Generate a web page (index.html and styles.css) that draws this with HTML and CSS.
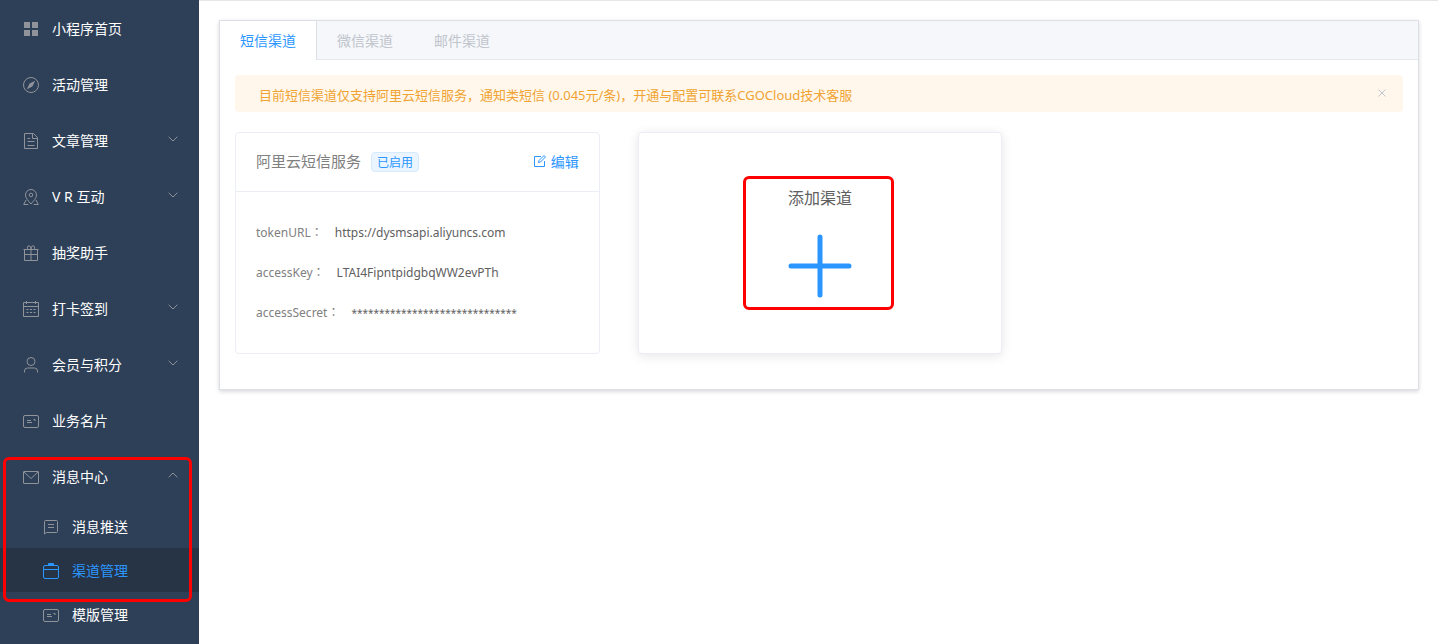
FILE: index.html
```html
<!DOCTYPE html>
<html lang="zh-CN">
<head>
<meta charset="utf-8">
<title>渠道管理</title>
<link rel="stylesheet" href="styles.css">
</head>
<body>
<svg class="sprite" aria-hidden="true">
  <symbol id="chevron" viewBox="0 0 10 6"><path d="M.7 .8 5 5 9.3 .8"/></symbol>
  <symbol id="card" viewBox="0 0 16 16"><rect x=".5" y="2.5" width="15" height="12" rx="1.500"/><path d="M4 7.500h4M4 9.500h5M10.500 6.500h1.500v1.500"/></symbol>
</svg>
<div class="app">
  <nav class="sidebar" aria-label="主菜单">
    <ul class="menu">
      <li><a class="item" href="#"><svg class="icon solid" viewBox="0 0 16 16"><path d="M1 1h6v6H1zM9 1h6v6H9zM1 9h6v6H1zM9 9h6v6H9z"/></svg><span class="label">小程序首页</span></a></li>
      <li><a class="item" href="#"><svg class="icon" viewBox="0 0 16 16"><circle cx="8" cy="8" r="7.500"/><path class="fill" d="M12.200 3.800 9.400 9.400 3.800 12.200 6.600 6.600z"/></svg><span class="label">活动管理</span></a></li>
      <li><a class="item" href="#"><svg class="icon" viewBox="0 0 16 16"><path d="M1.500 .5h9l4 4v11h-13zM9.500 .5v5h5M4.500 5.500h2.500M4.500 8.500h7M4.500 12.500h7"/></svg><span class="label">文章管理</span><svg class="arrow"><use href="#chevron"/></svg></a></li>
      <li><a class="item" href="#"><svg class="icon" viewBox="0 0 16 16"><path d="M8 15C5.500 12 2.500 9.300 2.500 6a5.500 5.500 0 0 1 11 0c0 3.300-3 6-5.500 9zM3 11 .7 15.500h4.600M13 11l2.300 4.500h-4.600"/><circle cx="8" cy="6" r="1.800"/></svg><span class="label">V R 互动</span><svg class="arrow"><use href="#chevron"/></svg></a></li>
      <li><a class="item" href="#"><svg class="icon" viewBox="0 0 16 16"><path d="M.5 4.500h15M1.500 4.500v11h13v-11M1.500 9.500h13M8 4.500v11M5 4.500C3.800 3 4.300 .8 6 .8c1.400 0 2 1.500 2 3.700 0-2.200.6-3.700 2-3.700 1.700 0 2.200 2.200 1 3.700"/></svg><span class="label">抽奖助手</span></a></li>
      <li><a class="item" href="#"><svg class="icon" viewBox="0 0 16 16"><path d="M.5 1.500h15v14H.5zM.5 5.500h15M3.500 0v3M12.500 0v3"/><path stroke-dasharray="2 1.500" d="M3.500 8.500h9M3.500 11.500h9"/></svg><span class="label">打卡签到</span><svg class="arrow"><use href="#chevron"/></svg></a></li>
      <li><a class="item" href="#"><svg class="icon" viewBox="0 0 16 16"><circle cx="8" cy="4.500" r="4"/><path d="M1.500 15.500V14a3 3 0 0 1 3-3h7a3 3 0 0 1 3 3v1.500"/></svg><span class="label">会员与积分</span><svg class="arrow"><use href="#chevron"/></svg></a></li>
      <li><a class="item" href="#"><svg class="icon"><use href="#card"/></svg><span class="label">业务名片</span></a></li>
      <li class="group">
        <a class="item" href="#" aria-expanded="true"><svg class="icon" viewBox="0 0 16 16"><rect x=".5" y="2.500" width="15" height="12" rx=".5"/><path d="M1 3l7 6.500L15 3"/></svg><span class="label">消息中心</span><svg class="arrow open"><use href="#chevron"/></svg></a>
        <ul class="submenu">
          <li><a class="item" href="#"><svg class="icon" viewBox="0 0 16 16"><path d="M1.500 15V2.500a1 1 0 0 1 1-1h11a1 1 0 0 1 1 1v10a1 1 0 0 1-1 1H3.500L1.500 15M5 5.500h6M5 8.500h6"/></svg><span class="label">消息推送</span></a></li>
          <li><a class="item active" href="#" aria-current="page"><svg class="icon" viewBox="0 0 16 16"><rect x=".5" y="2.500" width="15" height="13" rx="1.500"/><path d="M.5 6.500h15M5.500 2.500v-2h5v2M5.500 1.500h5"/></svg><span class="label">渠道管理</span></a></li>
          <li><a class="item" href="#"><svg class="icon"><use href="#card"/></svg><span class="label">模版管理</span></a></li>
        </ul>
        <div class="mark mark-menu"></div>
      </li>
    </ul>
  </nav>
  <main class="main">
    <section class="panel">
      <div class="tabs" role="tablist">
        <button class="tab selected" role="tab" aria-selected="true">短信渠道</button>
        <button class="tab" role="tab" aria-selected="false">微信渠道</button>
        <button class="tab" role="tab" aria-selected="false">邮件渠道</button>
      </div>
      <div class="content">
        <div class="alert" role="alert">
          <p class="alert-text">目前短信渠道仅支持阿里云短信服务，通知类短信 (0.045元/条)，开通与配置可联系CGOCloud技术客服</p>
          <button class="close" aria-label="关闭"><svg class="close-icon" viewBox="0 0 8 8"><path d="M.5 .5l7 7M7.500 .5l-7 7"/></svg></button>
        </div>
        <div class="cards">
          <article class="card">
            <header class="card-head">
              <h2 class="card-title">阿里云短信服务</h2>
              <span class="tag">已启用</span>
              <button class="edit"><svg class="edit-icon" viewBox="0 0 12 12"><path d="M7 1.500H.5v10h10V6M4.500 7.500l.5-2L10 .5l1.500 1.500-5 5z"/></svg>编辑</button>
            </header>
            <dl class="fields">
              <div class="field"><dt>tokenURL<span class="punct" lang="zh-TW">：</span></dt><dd>https://dysmsapi.aliyuncs.com</dd></div>
              <div class="field"><dt>accessKey<span class="punct" lang="zh-TW">：</span></dt><dd>LTAI4FipntpidgbqWW2evPTh</dd></div>
              <div class="field"><dt>accessSecret<span class="punct" lang="zh-TW">：</span></dt><dd class="masked">******************************</dd></div>
            </dl>
          </article>
          <button class="card add">
            <span class="add-title">添加渠道</span>
            <svg class="plus" viewBox="0 0 64 64"><path d="M32 3v58M3 32h58"/></svg>
            <span class="mark mark-add"></span>
          </button>
        </div>
      </div>
    </section>
  </main>
</div>
</body>
</html>
```
FILE: styles.css
```css
* { box-sizing: border-box; }
body, ul, p, h2, dl, dd { margin: 0; padding: 0; }
body, button { font-family: "Noto Sans", "Noto Sans CJK SC", sans-serif; }
body { background: #fff; font-size: 14px; }
button { background: none; border: 0; padding: 0; cursor: pointer; }
ul { list-style: none; }
a { text-decoration: none; color: inherit; }
svg { fill: none; stroke: currentColor; flex: none; }
.sprite { position: absolute; width: 0; height: 0; }
.punct { font-family: "Noto Sans CJK TC", sans-serif; line-height: 1; }

.app { display: flex; height: 100vh; overflow: hidden; }
.sidebar { width: 199px; flex: none; background: #2e4058; color: #fff; overflow: hidden; }
.item { display: flex; align-items: center; height: 56px; padding: 2px 20px 0 23px; }
.icon { width: 16px; height: 16px; margin-right: 13px; color: #909399; }
.icon.solid, .icon .fill { fill: currentColor; stroke: none; }
.label { flex: 1; line-height: 20px; }
.arrow { width: 10px; height: 6px; margin: 0 1px 4px 0; color: #909399; }
.arrow.open { transform: rotate(180deg); }
.group { position: relative; }
.submenu .item { height: 44px; padding-left: 43px; }
.submenu .active { background: #263445; color: #2b96ff; }
.active .icon { color: inherit; }
.mark { position: absolute; border: 3px solid #f00; border-radius: 6px; pointer-events: none; }
.mark-menu { left: 3px; right: 7px; top: 9px; height: 145px; }

.main { flex: 1; min-width: 0; border-top: 1px solid #e6e6e6; padding: 19px; padding-left: 20px; }
.panel { border: 1px solid #dcdfe6; box-shadow: 0 2px 4px rgba(0, 0, 0, .12), 0 0 6px rgba(0, 0, 0, .04); }
.tabs { display: flex; height: 39px; background: #f5f7fa; border-bottom: 1px solid #e4e7ed; }
.tab { height: 39px; padding: 0 20px 2px; border-right: 1px solid transparent; font-size: 14px; color: #c0c4cc; }
.tab.selected { background: #fff; color: #2b96ff; border-right-color: #dcdfe6; }
.content { padding: 15px 15px 35px; }
.alert { display: flex; justify-content: space-between; align-items: center; height: 37px; padding: 0 16px 0 24px; border-radius: 4px; background: #fff7eb; color: #f0a332; }
.alert-text { padding-top: 3px; font-size: 13px; line-height: 21px; }
.close { display: flex; padding: 0 1px 2px; color: #c0c4cc; }
.close-icon { width: 8px; height: 8px; }

.cards { display: grid; grid-template-columns: repeat(3, 1fr); gap: 38px; margin: 20px -2px 0 0; }
.card { border: 1px solid #ebeef5; border-radius: 4px; background: #fff; }
.card-head { display: flex; align-items: center; height: 59px; padding: 0 20px; border-bottom: 1px solid #ebeef5; }
.card-title { padding-bottom: 3px; font-size: 15px; font-weight: 400; color: #808080; }
.tag { height: 20px; margin-left: 10px; padding: 0 5px; border: 1px solid #d5eaff; border-radius: 4px; background: #eaf5ff; color: #2b96ff; font-size: 12px; line-height: 20px; }
.edit { display: flex; align-items: center; gap: 5px; margin-left: auto; padding-bottom: 2px; color: #2b96ff; font-size: 14px; }
.edit-icon { width: 12px; height: 12px; }
.fields { padding: 21px 20px 20px; font-size: 12px; line-height: 40px; }
.field { display: flex; gap: 12px; }
dt { color: #808080; }
dd { color: #606060; }
.masked { font-size: 10px; }
.add { position: relative; display: flex; flex-direction: column; align-items: center; justify-content: center; gap: 24px; padding-bottom: 3px; box-shadow: 0 2px 12px rgba(0, 0, 0, .1); }
.add-title { font-size: 16px; line-height: 24px; color: #606060; }
.plus { width: 64px; height: 64px; color: #2b96ff; stroke-width: 5; stroke-linecap: round; }
.mark-add { left: 104px; top: 43px; width: 151px; height: 134px; }
```
